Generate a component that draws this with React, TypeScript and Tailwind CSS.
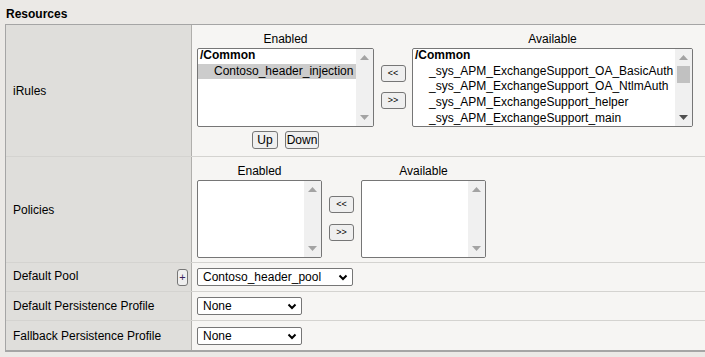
import React from "react";

type Item = { text: string; bold?: boolean; indent?: boolean; selected?: boolean };

function Arrow({ dir, dark }: { dir: "up" | "down"; dark?: boolean }) {
  return (
    <svg width="9" height="5" viewBox="0 0 9 5" className="block">
      {dir === "up" ? (
        <polygon points="0,5 9,5 4.5,0" fill={dark ? "#505050" : "#a3a3a3"} />
      ) : (
        <polygon points="0,0 9,0 4.5,5" fill={dark ? "#505050" : "#a3a3a3"} />
      )}
    </svg>
  );
}

function Listbox({
  w,
  h,
  items,
  thumb,
  downDark,
}: {
  w: string;
  h: string;
  items: Item[];
  thumb?: boolean;
  downDark?: boolean;
}) {
  return (
    <div className={`${w} ${h} flex border border-[#767676] rounded-[2px] bg-white overflow-hidden`}>
      <div className="flex-1 min-w-0 overflow-hidden pt-[0px]">
        <div className="mt-[-1px]">
          {items.map((it, i) => (
            <div
              key={i}
              className={`h-[15.7px] leading-[15.7px] whitespace-nowrap ${it.bold ? "font-bold pl-[2px]" : ""} ${
                it.indent ? "pl-[16px]" : ""
              } ${it.selected ? "bg-[#cccccc]" : ""}`}
            >
              {it.text}
            </div>
          ))}
        </div>
      </div>
      <div className="w-[17px] bg-[#f0f0f0] flex flex-col items-center">
        <div className="h-[17px] flex items-center justify-center">
          <Arrow dir="up" />
        </div>
        <div className="flex-1 w-full px-[2px]">
          {thumb && <div className="w-full h-[17px] bg-[#c1c1c1]" />}
        </div>
        <div className="h-[17px] flex items-center justify-center">
          <Arrow dir="down" dark={downDark} />
        </div>
      </div>
    </div>
  );
}

function SmallBtn({ children }: { children: React.ReactNode }) {
  return (
    <button className="w-[25px] h-[17px] border border-[#767676] rounded-[3px] bg-[#efefef] text-[9px] leading-[15px] text-black flex items-center justify-center">
      {children}
    </button>
  );
}

function Btn({ children, w }: { children: React.ReactNode; w: string }) {
  return (
    <button className={`${w} h-[18px] border border-[#767676] rounded-[3px] bg-[#efefef] text-[12px] leading-[16px] text-black flex items-center justify-center`}>
      {children}
    </button>
  );
}

function Select({ w, value }: { w: string; value: string }) {
  return (
    <div className={`relative ${w} h-[18px]`}>
      <select
        defaultValue={value}
        className="appearance-none w-full h-full border border-[#767676] rounded-[2px] bg-white pl-[5px] text-[12px] leading-[16px] text-black font-['Liberation_Sans',Arial,sans-serif] outline-none"
      >
        <option>{value}</option>
      </select>
      <svg
        width="10"
        height="7"
        viewBox="0 0 10 7"
        className="absolute right-[5px] top-[6px] pointer-events-none"
      >
        <polyline points="1.5,1.5 5,5 8.5,1.5" fill="none" stroke="#000" strokeWidth="2" />
      </svg>
    </div>
  );
}

const availableIrules: Item[] = [
  { text: "/Common", bold: true },
  { text: "_sys_APM_ExchangeSupport_OA_BasicAuth", indent: true },
  { text: "_sys_APM_ExchangeSupport_OA_NtlmAuth", indent: true },
  { text: "_sys_APM_ExchangeSupport_helper", indent: true },
  { text: "_sys_APM_ExchangeSupport_main", indent: true },
];

export default function App() {
  return (
    <div className="w-[705px] h-[357px] bg-[#ebe9e6] font-['Liberation_Sans',Arial,sans-serif] text-[12px] text-black overflow-hidden">
      <div className="h-[24px] pt-[6px] pl-[6px] leading-[16px] font-bold">Resources</div>
      <div className="ml-[5px] border-l border-t border-b-2 border-[#a5a5a5]">
        {/* iRules */}
        <div className="flex h-[132px] border-b border-[#d4d3d0]">
          <div className="w-[186px] shrink-0 bg-[#dfdedb] border-r border-[#b0afac] flex items-center pl-[7px]">
            iRules
          </div>
          <div className="flex-1 bg-[#f6f5f3] pl-[5px] pt-[7px] flex">
            <div className="flex flex-col items-center w-[177px]">
              <div className="h-[16px] leading-[14px]">Enabled</div>
              <Listbox
                w="w-[177px]"
                h="h-[79px]"
                items={[
                  { text: "/Common", bold: true },
                  { text: "Contoso_header_injection", indent: true, selected: true },
                ]}
              />
              <div className="flex gap-[7px] mt-[4px]">
                <Btn w="w-[26px]">Up</Btn>
                <Btn w="w-[34px]">Down</Btn>
              </div>
            </div>
            <div className="w-[38px] flex flex-col items-center pt-[33px] gap-[10px]">
              <SmallBtn>&lt;&lt;</SmallBtn>
              <SmallBtn>&gt;&gt;</SmallBtn>
            </div>
            <div className="flex flex-col items-center w-[281px]">
              <div className="h-[16px] leading-[14px]">Available</div>
              <Listbox w="w-[281px]" h="h-[79px]" items={availableIrules} thumb downDark />
            </div>
          </div>
        </div>
        {/* Policies */}
        <div className="flex h-[106px] border-b border-[#d4d3d0]">
          <div className="w-[186px] shrink-0 bg-[#dfdedb] border-r border-[#b0afac] flex items-center pl-[7px]">
            Policies
          </div>
          <div className="flex-1 bg-[#f6f5f3] pl-[5px] pt-[7px] flex">
            <div className="flex flex-col items-center w-[125px]">
              <div className="h-[16px] leading-[14px]">Enabled</div>
              <Listbox w="w-[125px]" h="h-[78px]" items={[]} />
            </div>
            <div className="w-[39px] flex flex-col items-center pt-[32px] gap-[11px]">
              <SmallBtn>&lt;&lt;</SmallBtn>
              <SmallBtn>&gt;&gt;</SmallBtn>
            </div>
            <div className="flex flex-col items-center w-[125px]">
              <div className="h-[16px] leading-[14px]">Available</div>
              <Listbox w="w-[125px]" h="h-[78px]" items={[]} />
            </div>
          </div>
        </div>
        {/* Default Pool */}
        <div className="flex h-[29px] border-b border-[#d4d3d0]">
          <div className="w-[186px] shrink-0 bg-[#dfdedb] border-r border-[#b0afac] flex items-center justify-between pl-[7px] pr-[3px] pb-[3px]">
            <span>Default Pool</span>
            <button className="w-[11px] h-[17px] mt-[4px] border border-[#767676] rounded-[3px] bg-[#efefef] text-[11px] leading-[13px] text-[#3a1f5c] flex items-center justify-center">
              +
            </button>
          </div>
          <div className="flex-1 bg-[#f6f5f3] pl-[5px] flex items-center">
            <Select w="w-[156px]" value="Contoso_header_pool" />
          </div>
        </div>
        {/* Default Persistence Profile */}
        <div className="flex h-[29px] border-b border-[#d4d3d0]">
          <div className="w-[186px] shrink-0 bg-[#dfdedb] border-r border-[#b0afac] flex items-center pl-[7px]">
            Default Persistence Profile
          </div>
          <div className="flex-1 bg-[#f6f5f3] pl-[5px] flex items-center">
            <Select w="w-[105px]" value="None" />
          </div>
        </div>
        {/* Fallback Persistence Profile */}
        <div className="flex h-[29px]">
          <div className="w-[186px] shrink-0 bg-[#dfdedb] border-r border-[#b0afac] flex items-center pl-[7px]">
            Fallback Persistence Profile
          </div>
          <div className="flex-1 bg-[#f6f5f3] pl-[5px] flex items-center">
            <Select w="w-[105px]" value="None" />
          </div>
        </div>
      </div>
    </div>
  );
}
